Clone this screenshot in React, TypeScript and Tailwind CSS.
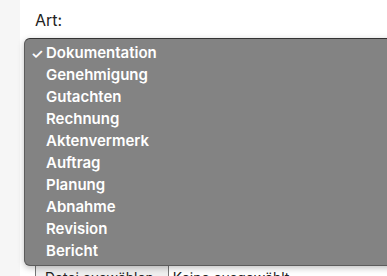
import React from "react";

const items = [
  "Dokumentation",
  "Genehmigung",
  "Gutachten",
  "Rechnung",
  "Aktenvermerk",
  "Auftrag",
  "Planung",
  "Abnahme",
  "Revision",
  "Bericht",
];

export default function App() {
  return (
    <div
      className="relative w-[387px] h-[276px] overflow-hidden bg-white flex"
      style={{ fontFamily: "Inter, 'Liberation Sans', sans-serif" }}
    >
      <div className="w-[20px] shrink-0 bg-[#f6f6f6]" />
      <div className="flex-1 flex flex-col pl-[15px] pt-[10px]">
        <div className="text-[16px] leading-[20px] text-[#222]">Art:</div>
        <div className="mt-[234px] flex text-[14px] leading-[18px] text-[#222]">
          <div className="border border-[#767676] bg-[#efefef] pl-[9px] pr-[14px] pt-[4px] pb-[2px]">Datei auswählen</div>
          <div className="pl-[4px] pt-[5px]">Keine ausgewählt</div>
        </div>
      </div>
      <div className="absolute left-[24px] top-[38px] w-[380px] h-[228px] rounded-[6px] bg-[#838383] border border-[#5c5c5c] border-t-[#333] shadow-[0_2px_6px_rgba(0,0,0,0.25)] pt-[3px]">
        {items.map((it, i) => (
          <div key={it} className="flex items-center h-[22px] text-white text-[15px] font-semibold">
            <span className="w-[21px] pl-[6px] text-[14px]">{i === 0 ? "✓" : ""}</span>
            <span>{it}</span>
          </div>
        ))}
      </div>
    </div>
  );
}
